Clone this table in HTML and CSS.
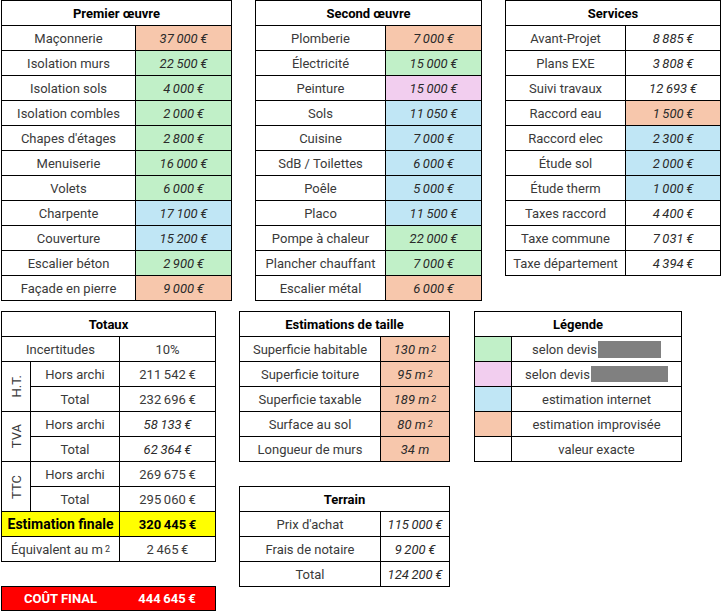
FILE: index.html
```html
<!DOCTYPE html>
<html lang="fr">
<head>
<meta charset="utf-8">
<title>Budget</title>
<link rel="stylesheet" href="styles.css">
</head>
<body>
<div class="sheet">
  <div class="top">
    <section class="tbl t1">
      <div class="h">Premier œuvre</div>
      <div>Maçonnerie</div><div class="v or">37&#8201;000&#8201;€</div>
      <div>Isolation murs</div><div class="v gr">22&#8201;500&#8201;€</div>
      <div>Isolation sols</div><div class="v gr">4&#8201;000&#8201;€</div>
      <div>Isolation combles</div><div class="v gr">2&#8201;000&#8201;€</div>
      <div>Chapes d'étages</div><div class="v gr">2&#8201;800&#8201;€</div>
      <div>Menuiserie</div><div class="v gr">16&#8201;000&#8201;€</div>
      <div>Volets</div><div class="v gr">6&#8201;000&#8201;€</div>
      <div>Charpente</div><div class="v bl">17&#8201;100&#8201;€</div>
      <div>Couverture</div><div class="v bl">15&#8201;200&#8201;€</div>
      <div>Escalier béton</div><div class="v gr">2&#8201;900&#8201;€</div>
      <div>Façade en pierre</div><div class="v or">9&#8201;000&#8201;€</div>
    </section>
    <section class="tbl t2">
      <div class="h">Second œuvre</div>
      <div>Plomberie</div><div class="v or">7&#8201;000&#8201;€</div>
      <div>Électricité</div><div class="v gr">15&#8201;000&#8201;€</div>
      <div>Peinture</div><div class="v pk">15&#8201;000&#8201;€</div>
      <div>Sols</div><div class="v bl">11&#8201;050&#8201;€</div>
      <div>Cuisine</div><div class="v bl">7&#8201;000&#8201;€</div>
      <div>SdB / Toilettes</div><div class="v bl">6&#8201;000&#8201;€</div>
      <div>Poêle</div><div class="v bl">5&#8201;000&#8201;€</div>
      <div>Placo</div><div class="v bl">11&#8201;500&#8201;€</div>
      <div>Pompe à chaleur</div><div class="v gr">22&#8201;000&#8201;€</div>
      <div>Plancher chauffant</div><div class="v gr">7&#8201;000&#8201;€</div>
      <div>Escalier métal</div><div class="v or">6&#8201;000&#8201;€</div>
    </section>
    <section class="tbl t3">
      <div class="h">Services</div>
      <div>Avant-Projet</div><div class="v">8&#8201;885&#8201;€</div>
      <div>Plans EXE</div><div class="v">3&#8201;808&#8201;€</div>
      <div>Suivi travaux</div><div class="v">12&#8201;693&#8201;€</div>
      <div>Raccord eau</div><div class="v or">1&#8201;500&#8201;€</div>
      <div>Raccord elec</div><div class="v bl">2&#8201;300&#8201;€</div>
      <div>Étude sol</div><div class="v bl">2&#8201;000&#8201;€</div>
      <div>Étude therm</div><div class="v bl">1&#8201;000&#8201;€</div>
      <div>Taxes raccord</div><div class="v">4&#8201;400&#8201;€</div>
      <div>Taxe commune</div><div class="v">7&#8201;031&#8201;€</div>
      <div>Taxe département</div><div class="v">4&#8201;394&#8201;€</div>
    </section>
  </div>

  <div class="bottom">
    <div class="col">
      <section class="tbl totaux">
        <div class="h">Totaux</div>
        <div class="s2">Incertitudes</div><div>10%</div>
        <div class="vt r2"><span>H.T.</span></div>
        <div>Hors archi</div><div>211&#8201;542&#8201;€</div>
        <div>Total</div><div>232&#8201;696&#8201;€</div>
        <div class="vt r2"><span>TVA</span></div>
        <div>Hors archi</div><div class="v">58&#8201;133&#8201;€</div>
        <div>Total</div><div class="v">62&#8201;364&#8201;€</div>
        <div class="vt r2"><span>TTC</span></div>
        <div>Hors archi</div><div>269&#8201;675&#8201;€</div>
        <div>Total</div><div>295&#8201;060&#8201;€</div>
        <div class="s2 yl b big">Estimation finale</div><div class="yl b">320&#8201;445&#8201;€</div>
        <div class="s2">Équivalent au m<sup>2</sup></div><div>2&#8201;465&#8201;€</div>
      </section>
      <section class="final">
        <div>COÛT FINAL</div><div>444&#8201;645&#8201;€</div>
      </section>
    </div>

    <div class="col">
      <section class="tbl estim">
        <div class="h">Estimations de taille</div>
        <div>Superficie habitable</div><div class="v or">130 m<sup>2</sup></div>
        <div>Superficie toiture</div><div class="v or">95 m<sup>2</sup></div>
        <div>Superficie taxable</div><div class="v or">189 m<sup>2</sup></div>
        <div>Surface au sol</div><div class="v or">80 m<sup>2</sup></div>
        <div>Longueur de murs</div><div class="v or">34 m</div>
      </section>
      <section class="tbl terrain">
        <div class="h">Terrain</div>
        <div>Prix d'achat</div><div class="v">115&#8201;000&#8201;€</div>
        <div>Frais de notaire</div><div class="v">9&#8201;200&#8201;€</div>
        <div>Total</div><div class="v">124&#8201;200&#8201;€</div>
      </section>
    </div>

    <div class="col">
      <section class="tbl legende">
        <div class="h">Légende</div>
        <div class="gr"></div><div>selon devis <span class="redact r1"></span></div>
        <div class="pk"></div><div>selon devis <span class="redact r2b"></span></div>
        <div class="bl"></div><div>estimation internet</div>
        <div class="or"></div><div>estimation improvisée</div>
        <div></div><div>valeur exacte</div>
      </section>
    </div>
  </div>
</div>
</body>
</html>
```

FILE: styles.css
```css
html, body {
  margin: 0;
  background: #fff;
}
body {
  font-family: Roboto, "Liberation Sans", sans-serif;
  font-size: 13px;
  color: #3a3a3a;
}
.sheet {
  padding-left: 1px;
}
.top {
  display: flex;
  align-items: flex-start;
  gap: 23px;
}
.bottom {
  display: flex;
  align-items: flex-start;
  margin-top: 10px;
}
.bottom .col:nth-child(2) { margin-left: 23px; }
.bottom .col:nth-child(3) { margin-left: 24px; }
.col {
  display: flex;
  flex-direction: column;
  gap: 24px;
}

.tbl {
  display: grid;
  grid-auto-rows: 25px;
  border-top: 1px solid #000;
  border-left: 1px solid #000;
}
.tbl > div {
  border-right: 1px solid #000;
  border-bottom: 1px solid #000;
  display: flex;
  align-items: center;
  justify-content: center;
  white-space: nowrap;
  overflow: hidden;
}
.tbl > .h {
  grid-column: 1 / -1;
  font-weight: 700;
  color: #000;
}
.t1 { grid-template-columns: 134px 96px; }
.t2 { grid-template-columns: 130px 96px; }
.t3 { grid-template-columns: 120px 95px; }
.totaux { grid-template-columns: 29px 89px 96px; }
.estim, .terrain { grid-template-columns: 141px 69px; }
.legende { grid-template-columns: 37px 170px; }

.v { font-style: italic; color: #2a2a2a; }
.b { font-weight: 700; color: #000; }
.big { font-size: 14px; }
.s2 { grid-column: span 2; }
.r2 { grid-row: span 2; }
.vt span {
  writing-mode: vertical-rl;
  transform: rotate(180deg);
}
sup {
  font-size: 9px;
  line-height: 0;
  vertical-align: 6px;
  margin-left: 2px;
}

.or { background: #f7c7ac; }
.gr { background: #c1f0c8; }
.bl { background: #c0e6f5; }
.pk { background: #f2ceef; }
.yl { background: #ffff00; }

.redact {
  display: inline-block;
  background: #808080;
  margin-left: 1px;
}
.r1 { width: 63px; height: 17px; }
.r2b { width: 77px; height: 16px; }

.final {
  display: grid;
  grid-template-columns: 117px 96px;
  height: 23px;
  border: 1px solid #000;
  background: #ff0000;
  color: #fff;
  font-weight: 700;
}
.final > div {
  display: flex;
  align-items: center;
  justify-content: center;
}
```
